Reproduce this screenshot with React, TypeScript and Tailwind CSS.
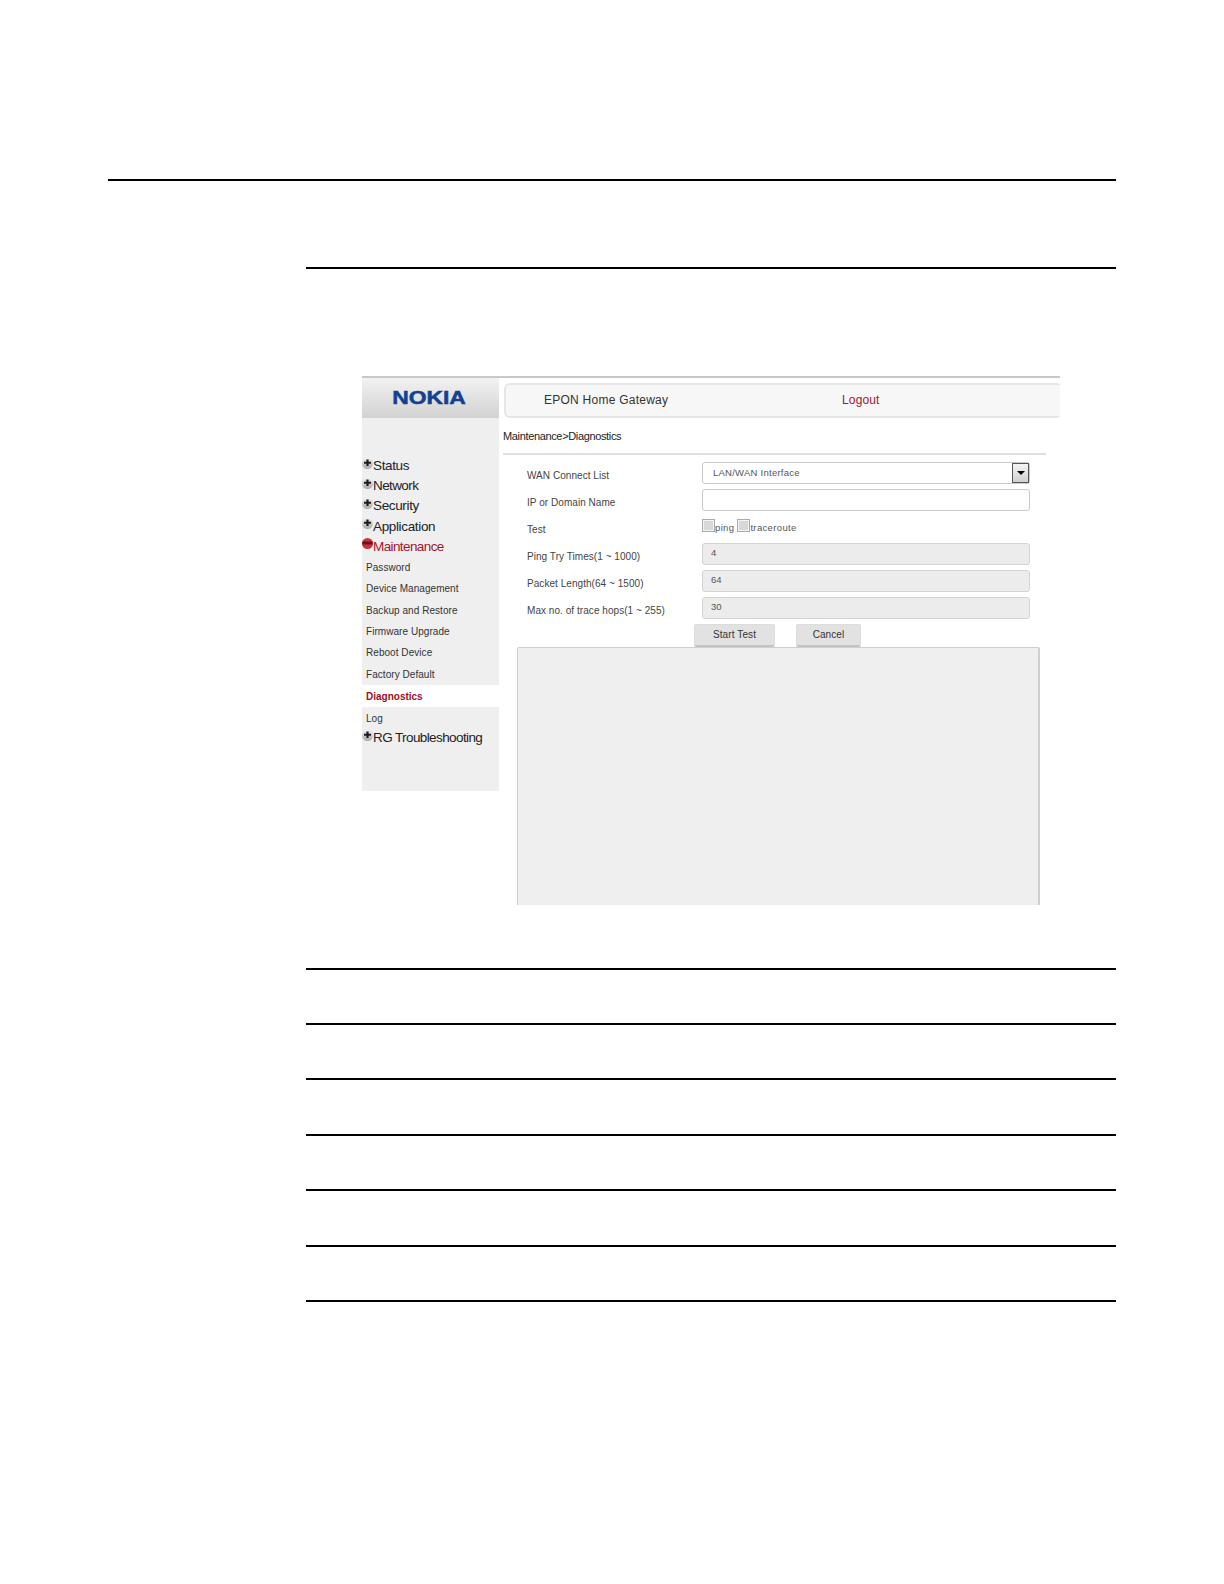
import React from 'react';

const font = 'font-["Liberation_Sans",Arial,sans-serif]';

function Bullet({ open }: { open?: boolean }) {
  return (
    <svg width="11" height="13" viewBox="0 0 11 13" className="shrink-0 -mt-[6px]">
      <defs>
        <linearGradient id="ball" x1="0" y1="0" x2="0" y2="1">
          <stop offset="0" stopColor="#f0f0f0" />
          <stop offset="1" stopColor="#a8a8a8" />
        </linearGradient>
      </defs>
      <circle cx="5.5" cy="6.5" r="5.5" fill={open ? '#d0303c' : 'url(#ball)'} />
      <path d={open ? 'M0.5 4.5h10v3H0.5z' : 'M4.4 2.5h2.2v2.3h2.4v2H6.6V9H4.4V6.8H2v-2h2.4z'} fill={open ? '#6d1019' : '#1c1c1c'} />
    </svg>
  );
}

function TopItem({ label, open, h = 'h-[20.2px]', track = 'tracking-[-0.35px]' }: { label: string; open?: boolean; h?: string; track?: string }) {
  return (
    <div className={`flex items-center ${h}`}>
      <Bullet open={open} />
      <span className={`text-[13.5px] ${track} ${open ? 'text-[#a8142c]' : 'text-[#222]'}`}>{label}</span>
    </div>
  );
}

function SubItem({ label, h = 'h-[21.3px]' }: { label: string; h?: string }) {
  return (
    <div className={`flex items-center pl-[4px] text-[10px] tracking-[0.05px] text-[#333] ${h}`}>{label}</div>
  );
}

function FormRow({ label, children }: { label: string; children: React.ReactNode }) {
  return (
    <div className="flex items-center h-[27px]">
      <div className="w-[199px] pl-[24px] pt-[4px] text-[10px] tracking-[0.05px] text-[#444]">{label}</div>
      <div className="w-[328px]">{children}</div>
    </div>
  );
}

function Disabled({ value }: { value: string }) {
  return (
    <div className="h-[22px] rounded-[3px] border border-[#d4d4d4] bg-[#ececec] pl-[8px] pb-[1px] flex items-center text-[9.5px] text-[#555]">
      {value}
    </div>
  );
}

function Check({ label }: { label: string }) {
  return (
    <div className="flex items-end">
      <div className="w-[13px] h-[13px] border border-[#aaa] bg-[#d8d8d8] shadow-[inset_0_0_0_1px_#f4f4f4]" />
      <span className="text-[9.5px] tracking-[0.35px] leading-[9px] text-[#555]">{label}</span>
    </div>
  );
}

function Shot() {
  return (
    <div className="ml-[362px] w-[698px] h-[529px] overflow-hidden border-t-2 border-[#c8c8c8] flex">
      {/* sidebar */}
      <div className="w-[137px] shrink-0">
        <div className="h-[40px] bg-gradient-to-b from-[#f2f2f2] to-[#d2d2d2] flex items-center justify-center pb-[1px] pr-[3px]">
          <span className="text-[18px] leading-none font-bold text-[#124191] scale-x-[1.27] [-webkit-text-stroke:0.5px_#124191]">NOKIA</span>
        </div>
        <div className="bg-[#efefef] h-[267px] pt-[38px]">
          <TopItem label="Status" />
          <TopItem label="Network" track="tracking-[-0.6px]" />
          <TopItem label="Security" />
          <TopItem label="Application" />
          <TopItem label="Maintenance" open track="tracking-[-0.6px]" />
          <SubItem label="Password" />
          <SubItem label="Device Management" />
          <SubItem label="Backup and Restore" />
          <SubItem label="Firmware Upgrade" />
          <SubItem label="Reboot Device" />
          <SubItem label="Factory Default" />
        </div>
        <div className="h-[22px] flex items-center pl-[4px] text-[10px] font-bold text-[#9c0f1f]">Diagnostics</div>
        <div className="bg-[#efefef] h-[84px]">
          <SubItem label="Log" h="h-[23.5px]" />
          <TopItem label="RG Troubleshooting" h="h-[16px]" track="tracking-[-0.6px]" />
        </div>
      </div>
      {/* main */}
      <div className="flex-1 min-w-0 pl-[4px]">
        <div className="ml-[1px] mt-[5px] h-[35px] pb-[1px] rounded-l-[6px] rounded-r-[3px] border-y-2 border-l-2 border-[#e6e6e6] bg-[#f7f7f7] flex items-center text-[12px] tracking-[0.25px]">
          <span className="ml-[38px] w-[298px] text-[#333]">EPON Home Gateway</span>
          <span className="text-[#a8142c] tracking-[0.15px]">Logout</span>
        </div>
        <div className="h-[35px] pb-[1px] pt-[2px] flex items-center text-[11px] tracking-[-0.35px] text-[#222]">Maintenance&gt;Diagnostics</div>
        <div className="h-[2px] w-[543px] bg-[#e0e0e0]" />
        <div className="pt-[4.5px]">
          <FormRow label="WAN Connect List">
            <div className="h-[22px] rounded-[3px] border border-[#c9c9c9] bg-white flex items-center justify-between pl-[10px]">
              <span className="text-[9.5px] tracking-[0.25px] text-[#555]">LAN/WAN Interface</span>
              <div className="w-[17px] h-[20px] border border-[#555] bg-gradient-to-b from-[#f4f4f4] to-[#d0d0d0] flex items-center justify-center">
                <div className="border-x-[4px] border-t-[4px] border-x-transparent border-t-black" />
              </div>
            </div>
          </FormRow>
          <FormRow label="IP or Domain Name">
            <div className="h-[22px] rounded-[3px] border border-[#c9c9c9] bg-white" />
          </FormRow>
          <FormRow label="Test">
            <div className="flex gap-[3px] pb-[3px]">
              <Check label="ping" />
              <Check label="traceroute" />
            </div>
          </FormRow>
          <FormRow label="Ping Try Times(1 ~ 1000)"><Disabled value="4" /></FormRow>
          <FormRow label="Packet Length(64 ~ 1500)"><Disabled value="64" /></FormRow>
          <FormRow label="Max no. of trace hops(1 ~ 255)"><Disabled value="30" /></FormRow>
        </div>
        <div className="flex h-[23px] mt-[2.5px] pl-[191px] gap-[21px]">
          <div className="w-[81px] h-[23px] pb-[1px] rounded-[2px] bg-[#e2e2e2] border border-[#dcdcdc] border-b-2 border-b-[#c4c4c4] flex items-center justify-center text-[10px] tracking-[0.1px] text-[#333]">Start Test</div>
          <div className="w-[65px] h-[23px] pb-[1px] rounded-[2px] bg-[#e2e2e2] border border-[#dcdcdc] border-b-2 border-b-[#c4c4c4] flex items-center justify-center text-[10px] tracking-[0.1px] text-[#333]">Cancel</div>
        </div>
        <div className="ml-[14px] w-[523px] h-[300px] rounded-t-[2px] border border-r-2 border-b-0 border-[#cfcfcf] bg-[#efefef]" />
      </div>
    </div>
  );
}

export default function App() {
  return (
    <div className={`w-[1224px] h-[1584px] bg-white overflow-hidden ${font}`}>
      <div className="pt-[179px] pl-[108px]">
        <div className="w-[1008px] h-[2px] bg-black" />
      </div>
      <div className="pt-[86px] pl-[306px]">
        <div className="w-[810px] h-[2px] bg-black" />
      </div>
      <div className="pt-[107px]">
        <Shot />
      </div>
      <div className="pt-[62.6px] pl-[306px] flex flex-col gap-[53.4px]">
        {[0, 1, 2, 3, 4, 5, 6].map((i) => (
          <div key={i} className="w-[810px] h-[2px] bg-black" />
        ))}
      </div>
    </div>
  );
}
